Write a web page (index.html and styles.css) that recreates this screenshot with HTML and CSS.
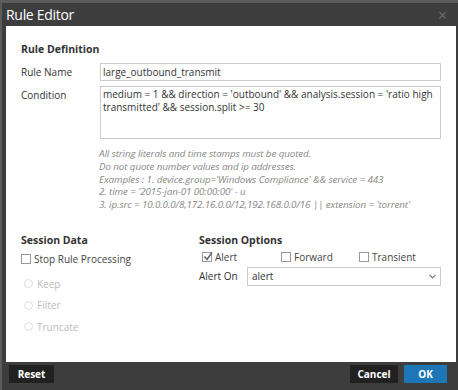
FILE: index.html
```html
<!DOCTYPE html>
<html lang="en">
<head>
  <meta charset="UTF-8" />
  <title>Rule Editor</title>
  <link rel="stylesheet" href="styles.css">
</head>
<body>
  <div class="dialog">
    <div class="dialog-header">
      <span class="dialog-title">Rule Editor</span>
      <span class="close">&#x2715;</span>
    </div>
    <div class="dialog-body">
      <h3>Rule Definition</h3>
      <div class="form-row">
        <label>Rule Name</label>
        <div class="field">large_outbound_transmit</div>
      </div>
      <div class="form-row">
        <label>Condition</label>
        <div class="field area">medium = 1 &amp;&amp; direction = 'outbound' &amp;&amp; analysis.session = 'ratio high transmitted' &amp;&amp; session.split &gt;= 30</div>
      </div>
      <div class="hint">
        All string literals and time stamps must be quoted.<br>
        Do not quote number values and ip addresses.<br>
        Examples : 1. device.group='Windows Compliance' &amp;&amp; service = 443<br>
        2. time = '2015-jan-01 00:00:00' - u<br>
        3. ip.src = 10.0.0.0/8,172.16.0.0/12,192.168.0.0/16 || extension = 'torrent'
      </div>

      <div class="sessions">
        <div class="col-data">
          <h3>Session Data</h3>
          <div class="check-row stop-row"><span class="box"></span>Stop Rule Processing</div>
          <div class="radio-list">
            <div class="radio-row"><span class="radio"></span>Keep</div>
            <div class="radio-row"><span class="radio"></span>Filter</div>
            <div class="radio-row"><span class="radio"></span>Truncate</div>
          </div>
        </div>
        <div class="col-options">
          <h3>Session Options</h3>
          <div class="option-checks">
            <div class="check-row opt-alert"><span class="box checked">
              <svg width="10" height="10" viewBox="0 0 10 10"><path d="M1.5 4.5 L4 7.5 L9 0.5" fill="none" stroke="#666" stroke-width="1.6"/></svg>
            </span>Alert</div>
            <div class="check-row opt-forward"><span class="box"></span>Forward</div>
            <div class="check-row"><span class="box"></span>Transient</div>
          </div>
          <div class="alert-on">
            <label>Alert On</label>
            <div class="select">alert
              <svg class="caret" width="7" height="5" viewBox="0 0 7 5"><path d="M0.5 0.8 L3.5 3.8 L6.5 0.8" fill="none" stroke="#777" stroke-width="1.2"/></svg>
            </div>
          </div>
        </div>
      </div>
    </div>
    <div class="dialog-footer">
      <button class="btn">Reset</button>
      <div class="footer-right">
        <button class="btn cancel">Cancel</button>
        <button class="btn primary">OK</button>
      </div>
    </div>
  </div>
</body>
</html>
```

FILE: styles.css
```css
body {
  margin: 0;
  background: #5b5b5b;
  font-family: 'Open Sans', sans-serif;
  font-size: 10px;
  color: #333;
  overflow: hidden;
}
.dialog {
  margin: 3px 0 0 2px;
  width: 458px;
  height: 387px;
  background: #3d3d3d;
  display: flex;
  flex-direction: column;
}
.dialog-header {
  height: 23px;
  display: flex;
  align-items: center;
  justify-content: space-between;
  padding: 0 12px 0 4px;
}
.dialog-title {
  color: #fff;
  font-size: 14px;
  letter-spacing: -0.3px;
}
.close {
  color: #666;
  font-size: 13px;
}
.dialog-body {
  background: #fff;
  margin: 0 4px 0 4px;
  height: 336px;
  padding: 16px 15px 0 15px;
  box-sizing: border-box;
}
h3 {
  margin: 0;
  font-size: 10.5px;
  font-weight: 700;
  color: #333;
}
.dialog-body > h3 {
  margin-bottom: 7px;
}
.form-row {
  display: flex;
  margin-bottom: 5px;
}
.form-row label {
  width: 79px;
  flex: none;
  padding-top: 2px;
}
.field {
  width: 341px;
  box-sizing: border-box;
  border: 1px solid #ccc;
  height: 18px;
  line-height: 16px;
  padding: 0 2px;
}
.field.area {
  height: 53px;
  line-height: 13px;
  padding: 1px 2px;
}
.hint {
  margin: 9px 0 0 78px;
  font-style: italic;
  color: #888;
  font-size: 9.8px;
  line-height: 12.8px;
  letter-spacing: -0.1px;
}
.sessions {
  display: flex;
  margin-top: 21px;
}
.col-data {
  width: 178px;
}
.col-options {
  flex: 1;
}
.check-row {
  display: flex;
  align-items: center;
  margin-top: 3px;
  color: #444;
}
.stop-row {
  margin-top: 5px;
}
.box {
  width: 10px;
  height: 10px;
  border: 1px solid #999;
  box-sizing: border-box;
  margin-right: 3px;
  position: relative;
}
.box svg {
  position: absolute;
  left: 0;
  top: -1px;
}
.radio-list {
  margin-top: 7px;
  padding-left: 3px;
}
.radio-row {
  display: flex;
  align-items: center;
  color: #bbb;
  height: 21.5px;
}
.radio {
  width: 9px;
  height: 9px;
  border: 1px solid #ddd;
  border-radius: 50%;
  box-sizing: border-box;
  margin-right: 4px;
}
.option-checks {
  display: flex;
  padding-left: 3px;
}
.opt-alert {
  width: 79px;
}
.opt-forward {
  width: 78px;
}
.alert-on {
  display: flex;
  align-items: center;
  margin-top: 3px;
}
.alert-on label {
  width: 48px;
}
.select {
  width: 194px;
  height: 19px;
  box-sizing: border-box;
  border: 1px solid #ccc;
  padding: 0 4px;
  line-height: 17px;
  display: flex;
  justify-content: space-between;
  align-items: center;
}
.dialog-footer {
  flex: 1;
  display: flex;
  justify-content: space-between;
  align-items: flex-start;
  padding: 3px 13px 0 7px;
}
.footer-right {
  display: flex;
  gap: 6px;
}
.btn {
  background: #212121;
  color: #fff;
  border: none;
  font-family: 'Open Sans', sans-serif;
  font-weight: 700;
  font-size: 10px;
  height: 18px;
  width: 45px;
  padding: 0;
}
.cancel {
  width: 48px;
}
.primary {
  background: #1d77b7;
  width: 43px;
}
```
